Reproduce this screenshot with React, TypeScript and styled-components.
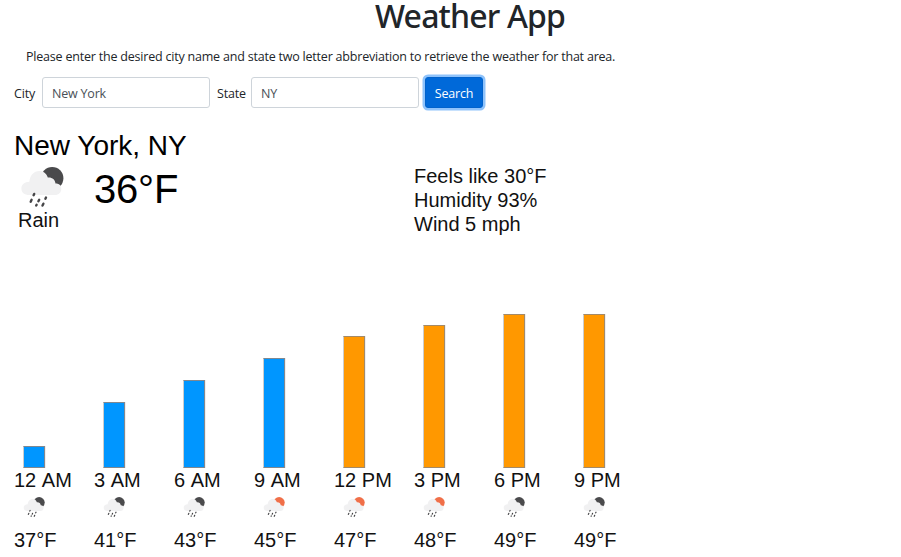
import React from 'react';
import styled, { createGlobalStyle } from 'styled-components';

const GlobalStyle = createGlobalStyle`
  * { box-sizing: border-box; }
  body {
    margin: 0;
    background: #fff;
    color: #212529;
    font-family: "Segoe UI", "Open Sans", sans-serif;
    font-size: 13px;
  }
`;

const Page = styled.main`
  width: 901px;
  height: 557px;
  padding: 0 14px;
`;

const Title = styled.h1`
  margin: 0 0 0 361px;
  height: 46px;
  padding-top: 1px;
  font-family: "Segoe UI", "Noto Sans", sans-serif;
  font-size: 32px;
  line-height: 30px;
  font-weight: 500;
  letter-spacing: -0.85px;
  white-space: nowrap;
`;

const Intro = styled.p`
  margin: 0 0 10px 12px;
  font-size: 12.5px;
  line-height: 21px;
  letter-spacing: -0.205px;
  white-space: nowrap;
`;

const Form = styled.form`
  display: flex;
  align-items: center;
  height: 31px;
`;

const Label = styled.label<{ $width: number }>`
  width: ${(p) => p.$width}px;
  padding-top: 1px;
  font-size: 12.5px;
  letter-spacing: -0.2px;
  white-space: nowrap;
`;

const Input = styled.input`
  width: 168px;
  height: 31px;
  margin-right: 7px;
  padding: 2px 9px 0;
  border: 1px solid #ced4da;
  border-radius: 3px;
  background: #fff;
  color: #495057;
  font: inherit;
  font-size: 12.5px;
  letter-spacing: -0.2px;
  outline: none;
`;

const SearchButton = styled.button`
  width: 58px;
  height: 31px;
  margin-left: -1px;
  padding: 1px 0 0;
  border: 1px solid #0062cc;
  border-radius: 3px;
  background: #0069d9;
  color: #fff;
  font: inherit;
  font-size: 12.5px;
  letter-spacing: -0.2px;
  box-shadow: 0 0 0 2.5px #8fc3fb;
`;

const Report = styled.section`
  color: #000;
  font-family: "Liberation Sans", Arial, sans-serif;
  font-size: 20px;
`;

const Place = styled.h2`
  margin: 20px 0 0;
  font-size: 28px;
  font-weight: 400;
  line-height: 36px;
`;

const Current = styled.div`
  display: grid;
  grid-template-columns: 80px 320px 1fr;
  height: 150px;
`;

const Condition = styled.div`
  padding: 3px 0 0 4px;
  line-height: 24px;
  color: #111;
`;

const ConditionIcon = styled.div`
  height: 41px;
  padding-left: 2px;
`;

const Temperature = styled.div`
  padding-top: 2px;
  font-size: 40px;
  line-height: 46px;
  letter-spacing: -0.2px;
`;

const Details = styled.div`
  color: #111;
  line-height: 24px;
`;

const Chart = styled.div`
  display: grid;
  grid-template-columns: repeat(8, 80px);
`;

const Column = styled.div`
  display: flex;
  flex-direction: column;
  white-space: nowrap;
`;

const BarTrack = styled.div`
  display: flex;
  align-items: flex-end;
  height: 154px;
  padding-left: 9px;
`;

const Bar = styled.div<{ $height: number; $warm: boolean }>`
  width: 22px;
  height: ${(p) => p.$height}px;
  background: ${(p) => (p.$warm ? '#ff9800' : '#0096ff')};
  border: 1px solid ${(p) => (p.$warm ? '#a38a68' : '#808890')};
  border-left-color: #cccccc;
  box-shadow: 1px 0 0 #eeeeee;
`;

const Hour = styled.div`
  height: 29px;
  line-height: 25px;
  color: #111;
  font-kerning: none;
`;

const IconSlot = styled.div`
  height: 31px;
  padding-left: 9px;
`;

const Reading = styled.div`
  line-height: 25px;
  color: #111;
`;

const IconSvg = styled.svg`
  display: block;
`;

function RainIcon({ size, sun = '#4a4a4c' }: { size: number; sun?: string }) {
  return (
    <IconSvg width={size} height={size} viewBox="0 0 44 44">
      <circle cx="32.2" cy="11.2" r="11.2" fill={sun} />
      <path
        d="M11 28C5.2 28 2.6 25.2 2.6 21.4c0-3.7 3.1-6.7 8-6.7C10.9 8.5 15.2 4 20.4 4c4.2 0 7.3 2.4 8.6 6.5 4.2-.4 7.3 1.8 7.7 6 3.6-.1 5.8 2.2 5.8 5.2 0 3.8-2.6 6.3-6.3 6.3Z"
        transform="translate(-1.2 0)"
        fill="#f1f1f2"
      />
      <g stroke="#454547" strokeWidth="2.4" strokeLinecap="round">
        <path d="M14.2 26.9l-.6 1.3M26 30.5l-.6 1.2M11.6 32.8l-.9 1.9M19.2 32.7l-.8 1.6M16.6 37.8l-.4.7M23.4 36.7l-.9 1.9" />
      </g>
    </IconSvg>
  );
}

const hours = [
  { time: '12 AM', temp: 37, bar: 22 },
  { time: '3 AM', temp: 41, bar: 66 },
  { time: '6 AM', temp: 43, bar: 88 },
  { time: '9 AM', temp: 45, bar: 110, day: true },
  { time: '12 PM', temp: 47, bar: 132, day: true },
  { time: '3 PM', temp: 48, bar: 143, day: true },
  { time: '6 PM', temp: 49, bar: 154 },
  { time: '9 PM', temp: 49, bar: 154 },
];

export default function App() {
  return (
    <>
      <GlobalStyle />
      <Page>
        <Title>Weather App</Title>
        <Intro>
          Please enter the desired city name and state two letter abbreviation to retrieve the weather for that area.
        </Intro>
        <Form onSubmit={(e) => e.preventDefault()}>
          <Label $width={28} htmlFor="city">City</Label>
          <Input id="city" defaultValue="New York" />
          <Label $width={34} htmlFor="state">State</Label>
          <Input id="state" defaultValue="NY" />
          <SearchButton type="submit">Search</SearchButton>
        </Form>
        <Report>
          <Place>New York, NY</Place>
          <Current>
            <Condition>
              <ConditionIcon>
                <RainIcon size={44} />
              </ConditionIcon>
              Rain
            </Condition>
            <Temperature>36°F</Temperature>
            <Details>
              <div>Feels like 30°F</div>
              <div>Humidity 93%</div>
              <div>Wind 5 mph</div>
            </Details>
          </Current>
          <Chart>
            {hours.map((h) => (
              <Column key={h.time}>
                <BarTrack>
                  <Bar $height={h.bar} $warm={h.temp > 45} />
                </BarTrack>
                <Hour>{h.time}</Hour>
                <IconSlot>
                  <RainIcon size={22} sun={h.day ? '#f06f48' : undefined} />
                </IconSlot>
                <Reading>{h.temp}°F</Reading>
              </Column>
            ))}
          </Chart>
        </Report>
      </Page>
    </>
  );
}
